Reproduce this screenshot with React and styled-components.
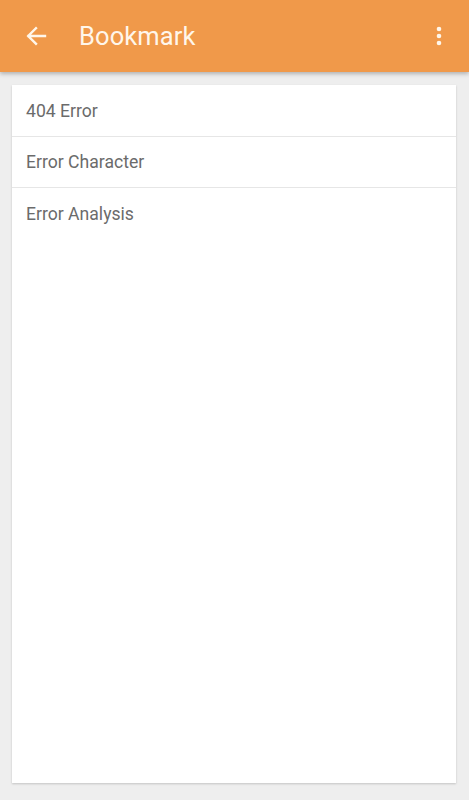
import styled, { createGlobalStyle } from "styled-components";

const GlobalStyle = createGlobalStyle`
    html, body {
        margin: 0;
        padding: 0;
        background: #eeeeee;
        font-family: Roboto, "Noto Sans", sans-serif;
    }
`;

const items = ["404 Error", "Error Character", "Error Analysis"];

function BackIcon() {
    return (
        <svg width="24" height="24" viewBox="0 0 24 24">
            <path
                d="M21 12H4.5M12 4.2L4.2 12l7.8 7.8"
                fill="none"
                stroke="#fff6ea"
                strokeWidth="2.4"
                strokeLinecap="square"
            />
        </svg>
    );
}

function MoreIcon() {
    return (
        <svg width="8" height="24" viewBox="0 0 8 24">
            <circle cx="4" cy="5" r="2.3" fill="#fff6ea" />
            <circle cx="4" cy="12" r="2.3" fill="#fff6ea" />
            <circle cx="4" cy="19" r="2.3" fill="#fff6ea" />
        </svg>
    );
}

export default function App() {
    return (
        <>
            <GlobalStyle />
            <Page>
                <Toolbar>
                    <IconButton>
                        <BackIcon />
                    </IconButton>
                    <Title>Bookmark</Title>
                    <MenuButton>
                        <MoreIcon />
                    </MenuButton>
                </Toolbar>
                <Content>
                    <ListCard>
                        {items.map((item, index) => (
                            <Row key={index} last={index === items.length - 1}>
                                {item}
                            </Row>
                        ))}
                    </ListCard>
                </Content>
            </Page>
        </>
    );
}

const Page = styled.div`
    width: 469px;
    height: 800px;
    background: #eeeeee;
    display: flex;
    flex-direction: column;
    overflow: hidden;
`;

const Toolbar = styled.header`
    height: 72px;
    flex-shrink: 0;
    background: #f0994a;
    display: flex;
    align-items: center;
    box-shadow: 0 2px 4px rgba(0, 0, 0, 0.25);
    position: relative;
    z-index: 1;
`;

const IconButton = styled.div`
    width: 24px;
    height: 24px;
    margin-left: 24px;
    display: flex;
    align-items: center;
    justify-content: center;
`;

const Title = styled.h1`
    margin: 0 0 0 31px;
    flex: 1;
    font-size: 25.5px;
    font-weight: 400;
    color: #fff6ea;
    letter-spacing: 0.1px;
`;

const MenuButton = styled.div`
    width: 8px;
    height: 24px;
    margin-right: 26px;
    display: flex;
`;

const Content = styled.main`
    flex: 1;
    padding: 13px 13px 17px 12px;
    display: flex;
`;

const ListCard = styled.section`
    flex: 1;
    background: #ffffff;
    box-shadow: 0 1px 2px rgba(0, 0, 0, 0.18);
    display: flex;
    flex-direction: column;
`;

const Row = styled.div`
    height: 51.5px;
    box-sizing: border-box;
    flex-shrink: 0;
    padding: 1px 0 0 14px;
    display: flex;
    align-items: center;
    font-size: 17.6px;
    color: #6b6b6b;
    border-bottom: ${({ last }) => (last ? "none" : "1.5px solid #e6e6e6")};
`;
